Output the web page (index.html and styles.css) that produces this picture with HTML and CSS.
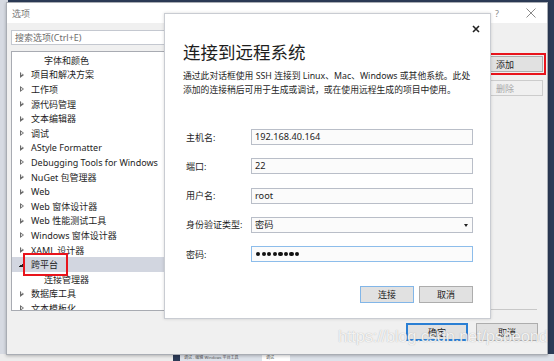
FILE: index.html
```html
<!DOCTYPE html>
<html lang="zh-CN">
<head>
<meta charset="utf-8">
<title>选项</title>
<link rel="stylesheet" href="styles.css">
</head>
<body>
<div class="desktop">
  <div class="bg-left"></div>
  <div class="bg-status">
    <span class="st-a">调试 - 编辑 Windows 平台工具</span>
    <span class="st-b">调试</span>
  </div>

  <div class="options-window">
    <div class="titlebar">
      <span class="title">选项</span>
      <span class="tb-help">?</span>
      <span class="tb-close">
        <svg width="10" height="10" viewBox="0 0 10 10"><path d="M0.5 0.5 L9.5 9.5 M9.5 0.5 L0.5 9.5" stroke="#8a8a8a" stroke-width="1" fill="none"/></svg>
      </span>
    </div>
    <div class="main">
      <div class="leftcol">
        <div class="search">搜索选项(Ctrl+E)</div>
        <div class="tree">
          <div class="row child">字体和颜色</div>
          <div class="row"><i class="exp"></i>项目和解决方案</div>
          <div class="row"><i class="exp"></i>工作项</div>
          <div class="row"><i class="exp"></i>源代码管理</div>
          <div class="row"><i class="exp"></i>文本编辑器</div>
          <div class="row"><i class="exp"></i>调试</div>
          <div class="row"><i class="exp"></i>AStyle Formatter</div>
          <div class="row"><i class="exp"></i>Debugging Tools for Windows</div>
          <div class="row"><i class="exp"></i>NuGet 包管理器</div>
          <div class="row"><i class="exp"></i>Web</div>
          <div class="row"><i class="exp"></i>Web 窗体设计器</div>
          <div class="row"><i class="exp"></i>Web 性能测试工具</div>
          <div class="row"><i class="exp"></i>Windows 窗体设计器</div>
          <div class="row"><i class="exp"></i>XAML 设计器</div>
          <div class="row selected"><i class="exp open"></i><span class="mark">跨平台</span></div>
          <div class="row child">连接管理器</div>
          <div class="row"><i class="exp"></i>数据库工具</div>
          <div class="row"><i class="exp"></i>文本模板化</div>
        </div>
      </div>
      <div class="page">
        <div class="page-body">
          <div class="list"></div>
          <div class="side">
            <div class="mark-btn"><button class="btn">添加</button></div>
            <button class="btn disabled">删除</button>
          </div>
        </div>
        <div class="sep"></div>
      </div>
    </div>
    <div class="footer">
      <button class="btn primary">确定</button>
      <button class="btn">取消</button>
    </div>
  </div>

  <div class="modal">
    <div class="m-head">
      <span class="m-close">
        <svg width="8" height="8" viewBox="0 0 8 8"><path d="M1 1 L7 7 M7 1 L1 7" stroke="#222" stroke-width="1.6" fill="none"/></svg>
      </span>
    </div>
    <div class="m-title">连接到远程系统</div>
    <div class="m-desc">通过此对话框使用 SSH 连接到 Linux、Mac、Windows 或其他系统。此处<br>添加的连接稍后可用于生成或调试，或在使用远程生成的项目中使用。</div>
    <div class="form">
      <div class="f-row"><span class="f-label">主机名:</span><span class="input">192.168.40.164</span></div>
      <div class="f-row"><span class="f-label">端口:</span><span class="input">22</span></div>
      <div class="f-row"><span class="f-label">用户名:</span><span class="input">root</span></div>
      <div class="f-row"><span class="f-label">身份验证类型:</span><span class="input select">密码<i class="caret"></i></span></div>
      <div class="f-row"><span class="f-label">密码:</span><span class="input focus"><span class="dots"><i></i><i></i><i></i><i></i><i></i><i></i><i></i><i></i></span></span></div>
    </div>
    <div class="m-actions">
      <button class="btn focus">连接</button>
      <button class="btn">取消</button>
    </div>
  </div>

  <div class="watermark">https://blog.csdn.net/psbeond</div>
</div>
</body>
</html>
```
FILE: styles.css
```css
* { box-sizing: border-box; }
html, body { margin: 0; padding: 0; }
body {
  font-family: "Noto Sans", "Noto Sans CJK SC", sans-serif;
  font-size: 9px;
  color: #1e1e1e;
}
.desktop {
  position: relative;
  width: 554px;
  height: 361px;
  overflow: hidden;
  background: #2c3b57;
}
.bg-left {
  position: absolute;
  left: 0; top: 0;
  width: 8px; height: 361px;
  background: #d6dae2;
}
.bg-status {
  position: absolute;
  left: 0; top: 354px;
  width: 554px; height: 7px;
  background: linear-gradient(to right, #ececec 0, #ececec 173px, #2c3b57 173px, #2c3b57 180px, #dde2ea 180px, #dde2ea 262px, #ffffff 262px, #ffffff 290px, #dde2ea 290px);
  font-size: 4px;
  line-height: 7px;
  color: #555;
  display: flex;
}
.st-a { margin-left: 184px; width: 78px; overflow: hidden; white-space: nowrap; }
.st-b { margin-left: 4px; }

/* options window */
.options-window {
  position: absolute;
  left: 6px; top: 2px;
  width: 542px; height: 353px;
  background: #f0f0f0;
  border: 1px solid #a9adb4;
  box-shadow: 0 1px 3px rgba(0,0,0,0.25);
  display: flex;
  flex-direction: column;
}
.titlebar {
  height: 20px;
  background: #fff;
  display: flex;
  align-items: center;
  padding-left: 5px;
  color: #7a7a7a;
  font-size: 9px;
}
.title { flex: 1; }
.tb-help { width: 10px; text-align: center; color: #8a8a8a; font-size: 9px; margin-right: 24px; }
.tb-close { width: 10px; height: 10px; margin-right: 11px; display: flex; }

.main {
  display: flex;
  padding: 7px 4px 0 4px;
  flex: 1;
}
.leftcol {
  width: 176px;
  display: flex;
  flex-direction: column;
}
.search {
  height: 15px;
  background: #fff;
  border: 1px solid #c4c8d0;
  color: #6d6d6d;
  padding-left: 3px;
  line-height: 13px;
}
.tree {
  margin-top: 6px;
  height: 260px;
  background: #fff;
  border: 1px solid #a8abb2;
  padding-top: 1px;
  overflow: hidden;
}
.row {
  height: 14.6px;
  display: flex;
  align-items: center;
  padding-left: 7px;
  white-space: nowrap;
}
.row.child { padding-left: 32px; }
.row.selected { background: #d2d6e0; }
.exp {
  display: block;
  width: 0; height: 0;
  margin-right: 7px;
  border-top: 3px solid transparent;
  border-bottom: 3px solid transparent;
  border-left: 4px solid #6a6a6a;
  position: relative;
  margin-left: 1px;
}
.exp::after {
  content: "";
  position: absolute;
  left: -3.2px; top: -1.6px;
  border-top: 1.6px solid transparent;
  border-bottom: 1.6px solid transparent;
  border-left: 2px solid #fff;
}
.selected .exp::after { border-left-color: #d2d6e0; }
.exp.open {
  border: none;
  width: 5px; height: 5px;
  background: linear-gradient(135deg, transparent 50%, #222 50%);
  margin-left: 0;
  margin-right: 7px;
}
.exp.open::after { display: none; }
.mark { position: relative; }
.mark::after {
  content: "";
  position: absolute;
  left: -8px; right: -10px; top: -5px; bottom: -5px;
  border: 2px solid #e8141c;
}

.page {
  flex: 1;
  display: flex;
  flex-direction: column;
  margin-left: 6px;
}
.page-body {
  flex: 1;
  display: flex;
}
.list { flex: 1; }
.side {
  width: 56px;
  padding-top: 26px;
  display: flex;
  flex-direction: column;
  gap: 8px;
}
.mark-btn { position: relative; }
.mark-btn::after {
  content: "";
  position: absolute;
  left: -3px; right: -3px; top: -3px; bottom: -3px;
  border: 2px solid #e8141c;
}
.sep {
  height: 1px;
  background: #c8c8c8;
  margin-right: 6px;
  margin-bottom: 1px;
}

.btn {
  font: inherit;
  font-size: 9px;
  color: #1e1e1e;
  background: #e1e1e1;
  border: 1px solid #adadad;
  height: 17px;
  width: 56px;
  padding: 0;
  text-align: left;
  padding-left: 8px;
  margin: 0;
}
.side .btn { height: 16px; }
.btn.disabled { color: #a8a8a8; background: #f0f0f0; border-color: #cccccc; }
.footer {
  height: 43px;
  display: flex;
  justify-content: flex-end;
  align-items: flex-start;
  gap: 8px;
  padding-right: 9px;
  padding-top: 12px;
}
.footer .btn { width: 62px; height: 18px; text-align: center; padding-left: 0; }
.footer .btn.primary { border: 2px solid #2a7fd4; }

/* modal */
.modal {
  position: absolute;
  left: 164px; top: 13px;
  width: 327px; height: 306px;
  background: #fff;
  border: 1px solid #c9ccd2;
  box-shadow: 0 0 3px rgba(0,0,0,0.15);
  padding: 0 17px 0 18px;
}
.m-head {
  height: 26px;
  display: flex;
  justify-content: flex-end;
  align-items: center;
  padding-top: 3px;
  margin-right: -7px;
}
.m-close { display: flex; width: 8px; height: 8px; }
.m-title {
  font-family: "Noto Sans CJK SC", sans-serif;
  font-size: 17.5px;
  line-height: 24px;
  color: #1e1e1e;
}
.m-desc {
  margin-top: 6px;
  font-size: 8.8px;
  line-height: 13.5px;
  color: #1e1e1e;
  white-space: nowrap;
}
.form {
  margin-top: 32px;
  padding-left: 3px;
  display: flex;
  flex-direction: column;
  gap: 13.3px;
}
.f-row { display: flex; align-items: center; height: 16px; }
.f-label { width: 65px; font-size: 9px; color: #1e1e1e; }
.input {
  flex: 1;
  height: 16px;
  background: #fbfbfb;
  border: 1px solid #b9bec8;
  padding-left: 3px;
  font-size: 9.2px;
  line-height: 14px;
  display: flex;
  align-items: center;
  position: relative;
}
.input.focus { border-color: #8dbdeb; }
.caret {
  position: absolute;
  right: 4px; top: 6px;
  border-left: 2.5px solid transparent;
  border-right: 2.5px solid transparent;
  border-top: 3px solid #222;
}
.dots { display: flex; gap: 1.4px; margin-left: 1px; }
.dots i { width: 4.2px; height: 4.2px; border-radius: 50%; background: #111; display: block; }
.m-actions {
  margin-top: 24px;
  display: flex;
  justify-content: flex-end;
  gap: 5px;
}
.m-actions .btn { width: 54px; height: 17px; text-align: center; padding-left: 0; }
.m-actions .btn.focus { border-color: #82b6e8; }

.watermark {
  position: absolute;
  left: 338px; top: 327px;
  font-family: "Liberation Sans", sans-serif;
  font-size: 16.5px;
  color: rgba(255,255,255,0.85);
  text-shadow: 0 0 1px rgba(120,120,120,0.6);
  white-space: nowrap;
  letter-spacing: -0.2px;
}
```
